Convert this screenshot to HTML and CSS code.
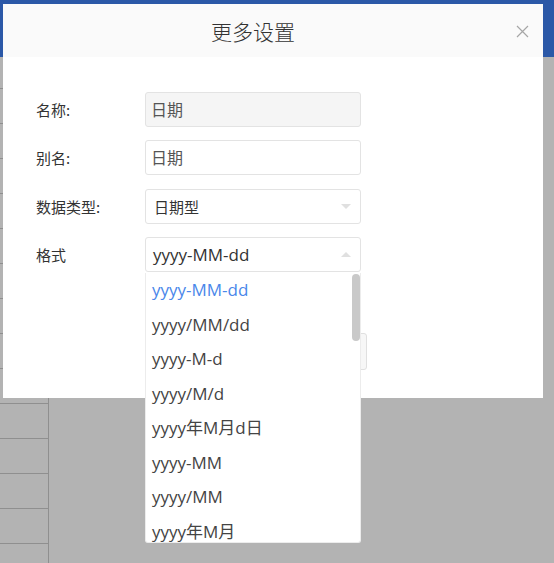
FILE: index.html
```html
<!DOCTYPE html>
<html lang="zh-CN">
<head>
    <meta charset="UTF-8">
    <title>更多设置</title>
    <link rel="stylesheet" href="styles.css">
</head>
<body>
    <div class="page">
        <div class="topbar"></div>
        <div class="grid">
            <div class="grid-head"></div>
            <div class="grid-row"></div>
            <div class="grid-row"></div>
            <div class="grid-row"></div>
            <div class="grid-row"></div>
            <div class="grid-row"></div>
            <div class="grid-row"></div>
            <div class="grid-row"></div>
            <div class="grid-row"></div>
            <div class="grid-row"></div>
            <div class="grid-row"></div>
            <div class="grid-row"></div>
            <div class="grid-row"></div>
            <div class="grid-row"></div>
            <div class="grid-row"></div>
        </div>
    </div>

    <div class="modal">
        <div class="modal-header">
            <h3>更多设置</h3>
            <span class="close">
                <svg width="13" height="13" viewBox="0 0 13 13"><path d="M1 1L12 12M12 1L1 12" stroke="#a6a6a6" stroke-width="1.2" fill="none"/></svg>
            </span>
        </div>
        <div class="modal-body">
            <div class="form-row">
                <label>名称:</label>
                <div class="field disabled">日期</div>
            </div>
            <div class="form-row">
                <label>别名:</label>
                <div class="field">日期</div>
            </div>
            <div class="form-row">
                <label>数据类型:</label>
                <div class="field select small">日期型<i class="caret"></i></div>
            </div>
            <div class="form-row">
                <label>格式</label>
                <div class="field select open">yyyy-MM-dd<i class="caret up"></i>
                    <ul class="menu">
                        <li class="active">yyyy-MM-dd</li>
                        <li>yyyy/MM/dd</li>
                        <li>yyyy-M-d</li>
                        <li>yyyy/M/d</li>
                        <li>yyyy年M月d日</li>
                        <li>yyyy-MM</li>
                        <li>yyyy/MM</li>
                        <li>yyyy年M月</li>
                        <span class="thumb"></span>
                    </ul>
                </div>
            </div>
            <div class="modal-footer">
                <button>确定</button>
                <button>取消</button>
            </div>
        </div>
    </div>
</body>
</html>
```

FILE: styles.css
```css
body {
    margin: 0;
    padding: 0;
    background: #b3b3b3;
    font-family: 'Noto Sans CJK SC', sans-serif;
    overflow: hidden;
}

.page {
    height: 563px;
}

.topbar {
    height: 57px;
    background: #2b58a7;
}

.grid {
    width: 48px;
    border-right: 1px solid #8f8f8f;
}

.grid-head {
    height: 31px;
}

.grid-row {
    height: 34px;
    border-top: 1px solid #8f8f8f;
}

.modal {
    position: absolute;
    left: 3px;
    top: 4px;
    width: 540px;
    height: 394px;
    background: #fff;
}

.modal-header {
    height: 53px;
    background: #fafafa;
    display: flex;
    align-items: center;
    justify-content: center;
    padding-right: 40px;
    position: relative;
}

.modal-header h3 {
    margin: 0;
    font-size: 21px;
    font-weight: 300;
    color: #333;
}

.close {
    position: absolute;
    right: 14px;
    top: 21px;
    width: 13px;
    height: 13px;
}

.close svg {
    display: block;
}

.modal-body {
    padding: 35px 0 0 33px;
}

.form-row {
    display: flex;
    align-items: center;
    margin-bottom: 13.4px;
}

.form-row label {
    width: 109px;
    font-size: 15px;
    color: #333;
}

.field {
    position: relative;
    box-sizing: border-box;
    width: 216px;
    height: 35px;
    border: 1px solid #e3e3e3;
    border-radius: 3px;
    padding-left: 5px;
    font-size: 16px;
    line-height: 33px;
    color: #555;
    background: #fff;
}

.field.disabled {
    background: #f5f5f5;
}

.select {
    padding-left: 7px;
    font-family: 'Open Sans', 'Noto Sans CJK SC', sans-serif;
    font-size: 17px;
    color: #333;
}

.select.small {
    padding-left: 8px;
    font-family: 'Noto Sans CJK SC', sans-serif;
    font-size: 15px;
}

.caret {
    position: absolute;
    right: 9px;
    top: 14px;
    width: 0;
    height: 0;
    border-left: 5px solid transparent;
    border-right: 5px solid transparent;
    border-top: 5px solid #e0e0e0;
}

.caret.up {
    border-top: none;
    border-bottom: 5px solid #e0e0e0;
}

.menu {
    position: absolute;
    left: -1px;
    top: 35px;
    width: 216px;
    height: 270px;
    margin: 0;
    padding: 0;
    list-style: none;
    background: #fff;
    border: 1px solid #ececec;
    border-top: none;
    border-radius: 0 0 3px 3px;
    box-sizing: border-box;
    overflow: hidden;
    z-index: 10;
}

.menu li {
    height: 34.5px;
    line-height: 34.5px;
    padding-left: 6px;
    font-size: 17px;
    color: #444;
    white-space: nowrap;
}

.menu li.active {
    color: #4a87ea;
}

.thumb {
    position: absolute;
    right: 0;
    top: 1px;
    width: 8px;
    height: 67px;
    border-radius: 4px;
    background: #c9c9c9;
}

.modal-footer {
    display: flex;
    justify-content: flex-end;
    gap: 10px;
    width: 331px;
    margin-top: 61px;
}

.modal-footer button {
    width: 76px;
    height: 37px;
    border: 1px solid #e0e0e0;
    border-radius: 3px;
    background: #f7f7f7;
    font-family: 'Noto Sans CJK SC', sans-serif;
    font-size: 14px;
    color: #333;
}
```
